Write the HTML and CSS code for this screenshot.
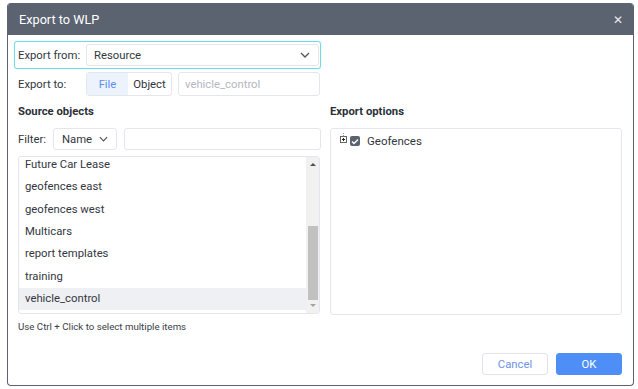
FILE: index.html
```html
<!DOCTYPE html>
<html lang="en">
<head>
  <meta charset="UTF-8">
  <title>Export to WLP</title>
  <link rel="stylesheet" href="styles.css">
</head>
<body>

  <div class="dialog">
    <!-- Titre -->
    <div class="dialog-header">
      <span class="dialog-title">Export to WLP</span>
      <span class="dialog-close">&#x2715;</span>
    </div>

    <div class="dialog-body">
      <div class="row row-from">
        <span class="row-label">Export from:</span>
        <div class="select select-wide">
          <span>Resource</span>
          <svg class="chevron" width="10" height="6" viewBox="0 0 10 6"><path d="M1 1l4 4 4-4" fill="none" stroke="#555" stroke-width="1.3"/></svg>
        </div>
      </div>

      <div class="row row-to">
        <span class="row-label">Export to:</span>
        <div class="segmented">
          <span class="seg seg-active">File</span>
          <span class="seg">Object</span>
        </div>
        <div class="text-input placeholder">vehicle_control</div>
      </div>

      <div class="columns">
        <div class="col col-left">
          <div class="section-title">Source objects</div>
          <div class="filter-row">
            <span class="filter-label">Filter:</span>
            <div class="select select-small">
              <span>Name</span>
              <svg class="chevron" width="9" height="6" viewBox="0 0 10 6"><path d="M1 1l4 4 4-4" fill="none" stroke="#555" stroke-width="1.3"/></svg>
            </div>
            <div class="text-input filter-input"></div>
          </div>

          <div class="list-box">
            <div class="list-items">
              <div class="list-item">Future Car Lease</div>
              <div class="list-item">geofences east</div>
              <div class="list-item">geofences west</div>
              <div class="list-item">Multicars</div>
              <div class="list-item">report templates</div>
              <div class="list-item">training</div>
              <div class="list-item selected">vehicle_control</div>
            </div>
            <div class="scrollbar">
              <span class="arrow arrow-up"></span>
              <div class="track"><div class="thumb"></div></div>
              <span class="arrow arrow-down"></span>
            </div>
          </div>
          <div class="hint">Use Ctrl + Click to select multiple items</div>
        </div>

        <div class="col col-right">
          <div class="section-title">Export options</div>
          <div class="options-box">
            <div class="tree-node">
              <span class="tree-expander">
                <svg width="7" height="11" viewBox="0 0 7 11">
                  <path d="M3.5 0v1M3.5 2v1" stroke="#999" stroke-width="1"/>
                  <rect x="0.5" y="3.5" width="6" height="6" fill="#fff" stroke="#666"/>
                  <path d="M2 6.5h3M3.5 5v3" stroke="#222" stroke-width="1"/>
                </svg>
              </span>
              <span class="checkbox">
                <svg width="8" height="7" viewBox="0 0 8 7"><path d="M1 3.5l2 2 4-4" fill="none" stroke="#fff" stroke-width="1.4"/></svg>
              </span>
              <span class="tree-label">Geofences</span>
            </div>
          </div>
        </div>
      </div>
    </div>

    <div class="dialog-footer">
      <button class="btn btn-cancel">Cancel</button>
      <button class="btn btn-ok">OK</button>
    </div>
  </div>

</body>
</html>
```

FILE: styles.css
```css
body {
  margin: 0;
  background-color: #ffffff;
  font-family: Roboto, "Liberation Sans", sans-serif;
  font-size: 11.3px;
  color: #333740;
}

.dialog {
  margin: 3px 0 0 7px;
  width: 627px;
  height: 383px;
  box-sizing: border-box;
  border: 1px solid #5b6270;
  border-top: none;
  border-radius: 4px;
  display: flex;
  flex-direction: column;
  background-color: #fff;
  overflow: hidden;
}

.dialog-header {
  height: 32px;
  flex: 0 0 32px;
  background-color: #5b6270;
  color: #fff;
  display: flex;
  align-items: center;
  justify-content: space-between;
  padding: 0 10px 0 11px;
}

.dialog-title {
  font-size: 12.7px;
}

.dialog-close {
  font-size: 12px;
  color: #e8eaee;
  margin-top: 1px;
}

.dialog-body {
  flex: 1;
  padding: 6px 11px 0 6px;
}

.row {
  display: flex;
  align-items: center;
}

.row-from {
  height: 28px;
  width: 307px;
  box-sizing: border-box;
  border: 1px solid #72d9e6;
  border-radius: 3px;
  padding: 0 1px 0 3px;
  box-shadow: 0 0 1px #72d9e6;
}

.row-label {
  width: 68px;
  flex: 0 0 68px;
}

.select {
  height: 22px;
  box-sizing: border-box;
  border: 1px solid #e3e6eb;
  border-radius: 3px;
  display: flex;
  align-items: center;
  justify-content: space-between;
  background-color: #fff;
}

.select-wide {
  flex: 1;
  padding: 0 8px 0 7px;
}

.row-to {
  height: 24px;
  margin-top: 3px;
  padding-left: 4px;
}

.segmented {
  display: flex;
  height: 24px;
  box-sizing: border-box;
  border: 1px solid #e3e6eb;
  border-radius: 3px;
  overflow: hidden;
  width: 86px;
}

.seg {
  display: flex;
  align-items: center;
  justify-content: center;
  width: 41px;
  color: #2f3440;
}

.seg + .seg {
  width: 43px;
}

.seg-active {
  background-color: #edf3fd;
  color: #5b8ef0;
}

.text-input {
  height: 24px;
  box-sizing: border-box;
  border: 1px solid #e3e6eb;
  border-radius: 3px;
  display: flex;
  align-items: center;
  padding-left: 6px;
}

.row-to .text-input {
  margin-left: 6px;
  width: 142px;
}

.placeholder {
  color: #b4b8bf;
}

.columns {
  display: flex;
  gap: 10px;
  margin-top: 7px;
  padding-left: 4px;
}

.col {
  display: flex;
  flex-direction: column;
}

.col-left {
  width: 302px;
}

.col-right {
  flex: 1;
}

.section-title {
  font-weight: bold;
  height: 18px;
  line-height: 18px;
  color: #2b2f38;
}

.filter-row {
  display: flex;
  align-items: center;
  margin-top: 7px;
  height: 22px;
}

.filter-label {
  width: 35px;
  flex: 0 0 35px;
}

.select-small {
  width: 64px;
  padding: 0 8px 0 8px;
}

.filter-input {
  flex: 1;
  height: 22px;
  margin-left: 7px;
  margin-right: -1px;
}

.list-box {
  margin-top: 6px;
  height: 158px;
  box-sizing: border-box;
  border: 1px solid #e3e6eb;
  border-radius: 3px;
  display: flex;
  overflow: hidden;
}

.list-items {
  flex: 1;
  margin-top: -3px;
}

.list-item {
  height: 22.33px;
  line-height: 22.33px;
  padding-left: 6px;
}

.list-item.selected {
  background-color: #eff0f3;
}

.scrollbar {
  width: 13px;
  background-color: #f1f1f1;
  display: flex;
  flex-direction: column;
  align-items: center;
}

.arrow {
  width: 0;
  height: 0;
  border-left: 3px solid transparent;
  border-right: 3px solid transparent;
}

.arrow-up {
  border-bottom: 3px solid #505050;
  margin: 6px 0 6px;
}

.arrow-down {
  border-top: 3px solid #a3a3a3;
  margin: 4px 0 6px;
}

.track {
  flex: 1;
  width: 12px;
  display: flex;
  flex-direction: column;
  justify-content: flex-end;
}

.thumb {
  height: 74px;
  background-color: #c1c1c1;
  margin: 0 1px 0 1px;
}

.hint {
  font-size: 9.7px;
  margin-top: 7px;
  color: #3a3e47;
}

.options-box {
  margin-top: 7px;
  height: 187px;
  box-sizing: border-box;
  border: 1px solid #e3e6eb;
  border-radius: 3px;
  padding: 4px 0 0 9px;
}

.tree-node {
  display: flex;
  align-items: center;
  height: 16px;
}

.tree-expander {
  display: flex;
  margin-top: -5px;
}

.checkbox {
  width: 10px;
  height: 10px;
  margin-left: 3px;
  border-radius: 2px;
  background-color: #5b6270;
  display: flex;
  align-items: center;
  justify-content: center;
}

.tree-label {
  margin-left: 7px;
  font-size: 11.5px;
}

.dialog-footer {
  display: flex;
  justify-content: flex-end;
  gap: 8px;
  padding: 0 11px 10px 0;
}

.btn {
  width: 66px;
  height: 22px;
  border-radius: 3px;
  font-family: Roboto, "Liberation Sans", sans-serif;
  font-size: 11.3px;
  cursor: pointer;
}

.btn-cancel {
  background-color: #fff;
  border: 1px solid #e0e3e8;
  color: #6e92e6;
}

.btn-ok {
  background-color: #4d8ff6;
  border: 1px solid #4d8ff6;
  color: #fff;
}
```
